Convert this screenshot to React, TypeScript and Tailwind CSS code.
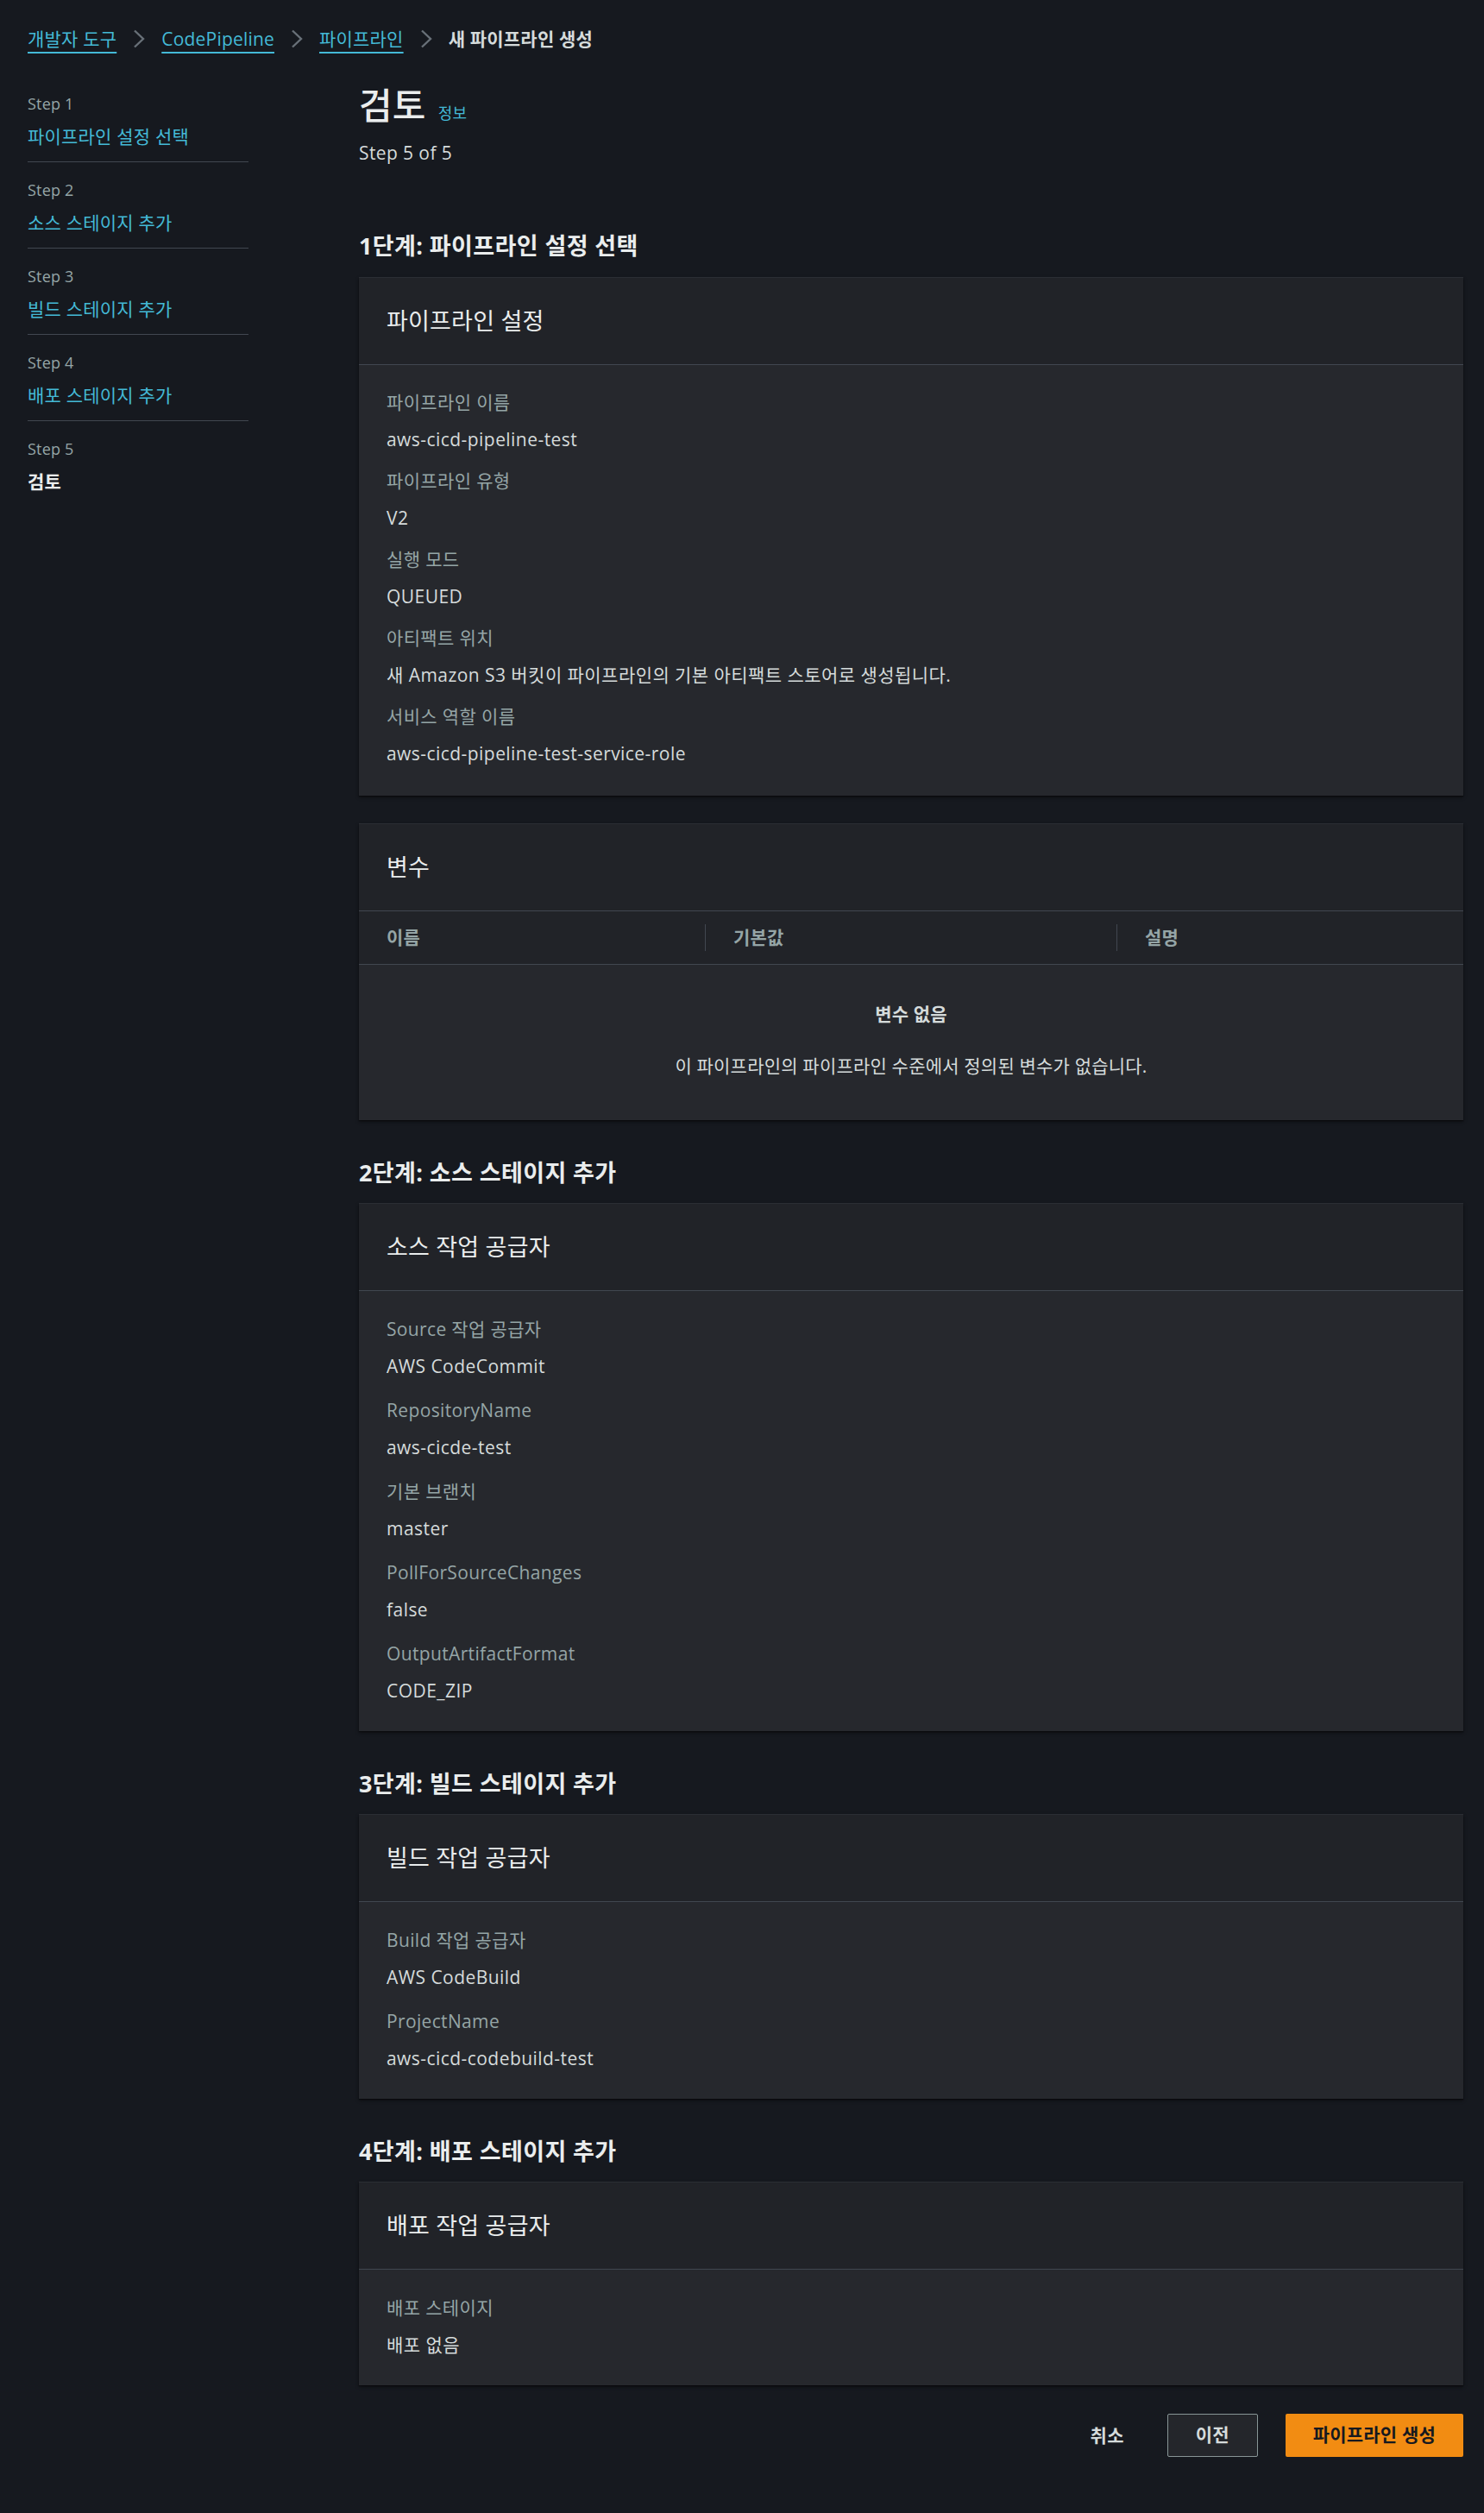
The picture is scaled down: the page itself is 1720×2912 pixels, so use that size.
import React from 'react';

type Field = { label: string; value: string };

const steps = [
    { step: 'Step 1', label: '파이프라인 설정 선택' },
    { step: 'Step 2', label: '소스 스테이지 추가' },
    { step: 'Step 3', label: '빌드 스테이지 추가' },
    { step: 'Step 4', label: '배포 스테이지 추가' },
    { step: 'Step 5', label: '검토', active: true },
];

const pipelineFields: Field[] = [
    { label: '파이프라인 이름', value: 'aws-cicd-pipeline-test' },
    { label: '파이프라인 유형', value: 'V2' },
    { label: '실행 모드', value: 'QUEUED' },
    { label: '아티팩트 위치', value: '새 Amazon S3 버킷이 파이프라인의 기본 아티팩트 스토어로 생성됩니다.' },
    { label: '서비스 역할 이름', value: 'aws-cicd-pipeline-test-service-role' },
];

const sourceFields: Field[] = [
    { label: 'Source 작업 공급자', value: 'AWS CodeCommit' },
    { label: 'RepositoryName', value: 'aws-cicde-test' },
    { label: '기본 브랜치', value: 'master' },
    { label: 'PollForSourceChanges', value: 'false' },
    { label: 'OutputArtifactFormat', value: 'CODE_ZIP' },
];

const buildFields: Field[] = [
    { label: 'Build 작업 공급자', value: 'AWS CodeBuild' },
    { label: 'ProjectName', value: 'aws-cicd-codebuild-test' },
];

const deployFields: Field[] = [{ label: '배포 스테이지', value: '배포 없음' }];

const Chevron = () => (
    <svg width="14" height="22" viewBox="0 0 14 22" fill="none" className="shrink-0">
        <polyline points="2,1.5 12,11 2,20.5" stroke="#687078" strokeWidth="2.4" strokeLinejoin="miter" />
    </svg>
);

const Card: React.FC<{ title: string; children: React.ReactNode }> = ({ title, children }) => (
    <div className="bg-[#26282d] border-t border-[#2b2e34] shadow-[0_1px_1px_0_rgba(0,0,0,0.35),0_2px_4px_0_rgba(0,0,0,0.45)]">
        <div className="bg-[#212328] border-b border-[#414750] px-8 pt-[32px] pb-[32px] text-[27px] leading-[36px] text-[#eaeded]">
            {title}
        </div>
        {children}
    </div>
);

const FieldList: React.FC<{ fields: Field[]; className: string }> = ({ fields, className }) => (
    <div className={className}>
        {fields.map(f => (
            <div key={f.label}>
                <div className="text-[21px] leading-[30px] text-[#95a5a6] tracking-[0.35px]">{f.label}</div>
                <div className="mt-[13px] text-[21px] leading-[30px] text-[#d5dbdb] tracking-[0.45px]">{f.value}</div>
            </div>
        ))}
    </div>
);

const SectionHeading: React.FC<{ children: React.ReactNode; className: string }> = ({ children, className }) => (
    <h2 className={className}>{children}</h2>
);

export default function App() {
    return (
        <div className="min-h-screen bg-[#16191f] font-['Open_Sans','Noto_Sans_CJK_KR',sans-serif] tracking-[0.2px] text-[#d5dbdb]">
            {/* breadcrumb */}
            <nav className="flex items-center gap-[19px] px-8 pt-[30px] text-[21px] leading-[30px]">
                <a className="text-[#44b9d6] underline decoration-2 underline-offset-[7px]">개발자 도구</a>
                <Chevron />
                <a className="text-[#44b9d6] underline decoration-2 underline-offset-[7px]">CodePipeline</a>
                <Chevron />
                <a className="text-[#44b9d6] underline decoration-2 underline-offset-[7px]">파이프라인</a>
                <Chevron />
                <span className="font-bold text-[#d5dbdb]">새 파이프라인 생성</span>
            </nav>

            <div className="flex mt-[38px]">
                {/* wizard steps */}
                <aside className="w-[256px] ml-8 shrink-0">
                    {steps.map((s, i) => (
                        <div
                            key={s.step}
                            className={`${i === 0 ? 'pt-[10px]' : 'pt-[20px]'} ${s.active ? '' : 'pb-[14px] border-b border-[#414750]'}`}
                        >
                            <div className="text-[18px] leading-[24px] text-[#95a5a6]">{s.step}</div>
                            <div className={`mt-[11px] text-[21px] leading-[30px] ${s.active ? 'font-bold text-[#eaeded]' : 'text-[#44b9d6]'}`}>
                                {s.label}
                            </div>
                        </div>
                    ))}
                </aside>

                <main className="flex-1 ml-[128px] mr-6 pb-[64px]">
                    <div className="flex items-baseline gap-[14px]">
                        <h1 className="text-[42px] leading-[48px] font-medium text-[#eaeded]">검토</h1>
                        <a className="text-[18px] text-[#44b9d6]">정보</a>
                    </div>
                    <div className="mt-[16px] text-[21px] leading-[30px] tracking-[0.4px] text-[#d5dbdb]">Step 5 of 5</div>

                    <SectionHeading className="mt-[76px] mb-[19px] text-[27px] leading-[34px] font-bold tracking-[0.4px] text-[#eaeded]">
                        1단계: 파이프라인 설정 선택
                    </SectionHeading>
                    <Card title="파이프라인 설정">
                        <FieldList fields={pipelineFields} className="flex flex-col gap-[18px] px-8 pt-[28px] pb-[34px]" />
                    </Card>

                    <div className="mt-8">
                        <Card title="변수">
                            <div className="grid grid-cols-[401px_477px_1fr] h-[62px] bg-[#212328] border-b border-[#414750] text-[21px] font-bold text-[#95a5a6]">
                                <div className="flex items-center pl-8">이름</div>
                                <div className="flex items-center">
                                    <div className="w-px h-[31px] bg-[#414750]" />
                                    <span className="pl-8">기본값</span>
                                </div>
                                <div className="flex items-center">
                                    <div className="w-px h-[31px] bg-[#414750]" />
                                    <span className="pl-8">설명</span>
                                </div>
                            </div>
                            <div className="pt-[42px] pb-[48px] text-center text-[21px] leading-[30px]">
                                <div className="font-bold text-[#d5dbdb]">변수 없음</div>
                                <div className="mt-[30px] text-[#d5dbdb]">이 파이프라인의 파이프라인 수준에서 정의된 변수가 없습니다.</div>
                            </div>
                        </Card>
                    </div>

                    <SectionHeading className="mt-[44px] mb-[18px] text-[27px] leading-[34px] font-bold tracking-[0.4px] text-[#eaeded]">
                        2단계: 소스 스테이지 추가
                    </SectionHeading>
                    <Card title="소스 작업 공급자">
                        <FieldList fields={sourceFields} className="flex flex-col gap-[21px] px-8 pt-[29px] pb-[32px]" />
                    </Card>

                    <SectionHeading className="mt-[44px] mb-[18px] text-[27px] leading-[34px] font-bold tracking-[0.4px] text-[#eaeded]">
                        3단계: 빌드 스테이지 추가
                    </SectionHeading>
                    <Card title="빌드 작업 공급자">
                        <FieldList fields={buildFields} className="flex flex-col gap-[21px] px-8 pt-[29px] pb-[32px]" />
                    </Card>

                    <SectionHeading className="mt-[44px] mb-[18px] text-[27px] leading-[34px] font-bold tracking-[0.4px] text-[#eaeded]">
                        4단계: 배포 스테이지 추가
                    </SectionHeading>
                    <Card title="배포 작업 공급자">
                        <FieldList fields={deployFields} className="flex flex-col gap-[21px] px-8 pt-[29px] pb-[32px]" />
                    </Card>

                    <div className="flex justify-end items-center gap-8 mt-[33px]">
                        <button className="px-[18px] text-[21px] leading-[30px] font-bold text-[#d5dbdb]">취소</button>
                        <button className="h-[50px] px-8 rounded-[2px] border border-[#879596] bg-[#24262b] text-[21px] font-bold text-[#d5dbdb]">
                            이전
                        </button>
                        <button className="h-[50px] px-8 rounded-[2px] bg-[#f28c12] text-[21px] font-bold text-[#16191f]">
                            파이프라인 생성
                        </button>
                    </div>
                </main>
            </div>
        </div>
    );
}
